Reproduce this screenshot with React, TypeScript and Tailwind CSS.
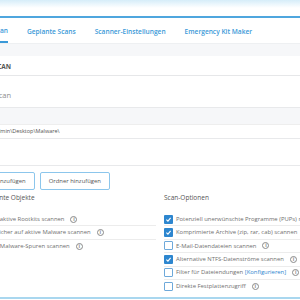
import React from "react";

function Info() {
  return (
    <span className="inline-flex items-center justify-center w-[7px] h-[7px] rounded-full border border-[#8a8a8a] text-[5px] leading-none text-[#8a8a8a] font-bold shrink-0">
      i
    </span>
  );
}

function Box({ checked }: { checked: boolean }) {
  return checked ? (
    <span className="w-[9px] h-[9px] bg-[#2d86cf] rounded-[1px] flex items-center justify-center shrink-0">
      <svg width="7" height="7" viewBox="0 0 10 10">
        <path d="M2 5.2 L4.2 7.3 L8 2.8" fill="none" stroke="white" strokeWidth="1.6" />
      </svg>
    </span>
  ) : (
    <span className="w-[9px] h-[9px] bg-white border border-[#6ea9da] rounded-[1px] shrink-0" />
  );
}

function Row({ checked, children }: { checked: boolean; children: React.ReactNode }) {
  return (
    <div className="h-[13.4px] flex items-center gap-[3px] whitespace-nowrap">
      <Box checked={checked} />
      <span className="flex items-center gap-[6px]">{children}</span>
    </div>
  );
}

export default function App() {
  return (
    <div
      className="w-[300px] h-[300px] overflow-hidden bg-white text-[#707070]"
      style={{ fontFamily: '"Open Sans", "Noto Sans", sans-serif' }}
    >
      <div className="w-[480px] -ml-[23px] flex flex-col">
        <div className="h-[16px] bg-gradient-to-b from-[#d6edf9] via-white to-white" />
        <div className="h-[2px] bg-[#4fa6de]" />
        <div className="h-[26px] flex gap-[19px] pl-[16px] text-[6.6px] font-semibold text-[#3a99d8] border-b border-[#eef0f2]">
          <div className="flex items-center border-b-2 border-[#3a99d8] pt-[2px]">Scan</div>
          <div className="flex items-center pt-[2px]">Geplante Scans</div>
          <div className="flex items-center pt-[2px]">Scanner-Einstellungen</div>
          <div className="flex items-center pt-[2px]">Emergency Kit Maker</div>
        </div>
        <div className="h-[12px] bg-[#f6f7f9]" />
        <div className="h-[20px] flex items-center border-b border-[#e6e7e9] text-[6.5px] font-bold text-[#555] pt-[2px]">
          <span className="-ml-[60px]">BENUTZERDEFINIERTER SCAN</span>
        </div>
        <div className="h-[31px] flex items-center text-[7.5px] text-[#8e8e8e] pt-[8px]">
          <span className="-ml-[53px]">Benutzerdefinierter Scan</span>
        </div>
        <div className="border-y border-[#e8e9eb] h-[59px] flex flex-col">
          <div className="h-[17px] bg-[#f6f7f9] border-b border-[#eeeeee]" />
          <div className="h-[14px] flex items-center border-b border-[#e8e9eb] text-[5.5px] text-[#555]">
            <span className="-ml-[7px]">C:\Users\Admin\Desktop\Malware\</span>
          </div>
        </div>
        <div className="flex gap-[5px] mt-[6px] text-[5.9px] text-[#555]">
          <div className="h-[18px] px-[8px] flex items-center border border-[#8cc6ec] rounded-[2px] -ml-[14px]">
            Dateien hinzufügen
          </div>
          <div className="h-[18px] px-[8px] flex items-center border border-[#8cc6ec] rounded-[2px]">
            Ordner hinzufügen
          </div>
        </div>
        <div className="grid grid-cols-[179px_300px] gap-[8px] mt-[4px] text-[5.9px]">
          <div className="flex flex-col">
            <div className="h-[8px] leading-[8px] text-[6.5px] text-[#555]">Gescannte Objekte</div>
            <div className="mt-[11px] flex flex-col divide-y divide-[#ececec]">
              <Row checked>
                Auf aktive Rootkits scannen <Info />
              </Row>
              <Row checked>
                Speicher auf aktive Malware scannen <Info />
              </Row>
              <Row checked>
                Auf Malware-Spuren scannen <Info />
              </Row>
            </div>
          </div>
          <div className="flex flex-col">
            <div className="h-[8px] leading-[8px] text-[6.5px] text-[#555]">Scan-Optionen</div>
            <div className="mt-[11px] flex flex-col divide-y divide-[#ececec]">
              <Row checked>
                Potenziell unerwünschte Programme (PUPs) melden <Info />
              </Row>
              <Row checked>
                Komprimierte Archive (zip, rar, cab) scannen <Info />
              </Row>
              <Row checked={false}>
                E-Mail-Datendateien scannen <Info />
              </Row>
              <Row checked>
                Alternative NTFS-Datenströme scannen <Info />
              </Row>
              <Row checked={false}>
                <span>
                  Filter für Dateiendungen <span className="text-[#2d86cf]">[Konfigurieren]</span>
                </span>
                <Info />
              </Row>
              <Row checked={false}>
                Direkte Festplattenzugriff <Info />
              </Row>
            </div>
          </div>
        </div>
        <div className="mt-[4px] h-[2px] bg-[#a9d7ef]" />
      </div>
    </div>
  );
}
